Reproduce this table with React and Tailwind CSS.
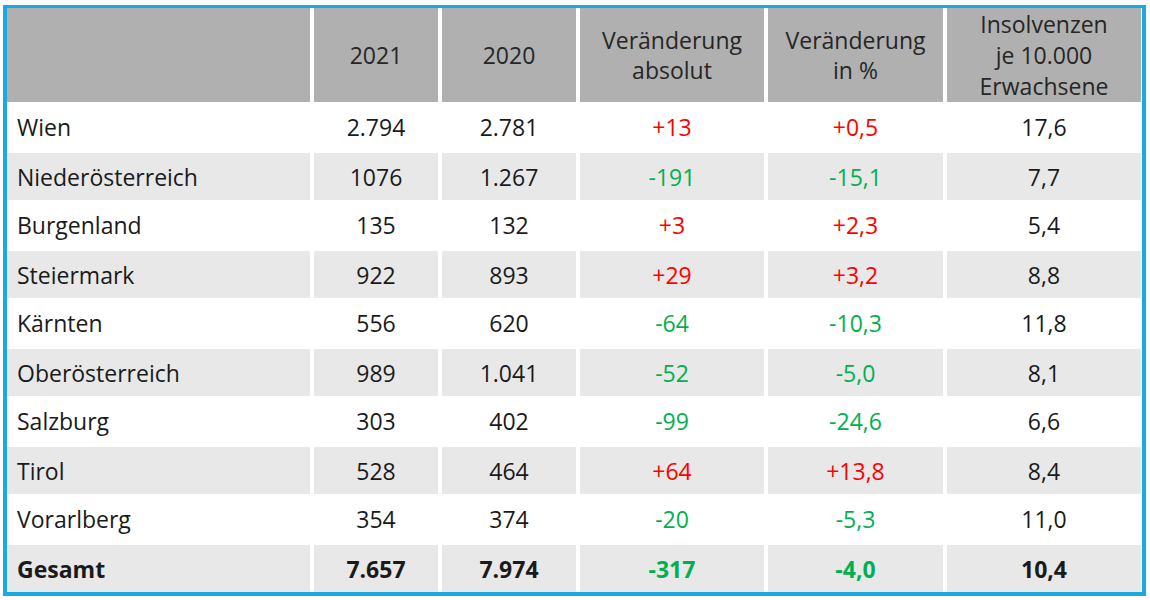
const rows = [
  ['Wien', '2.794', '2.781', '+13', '+0,5', '17,6'],
  ['Niederösterreich', '1076', '1.267', '-191', '-15,1', '7,7'],
  ['Burgenland', '135', '132', '+3', '+2,3', '5,4'],
  ['Steiermark', '922', '893', '+29', '+3,2', '8,8'],
  ['Kärnten', '556', '620', '-64', '-10,3', '11,8'],
  ['Oberösterreich', '989', '1.041', '-52', '-5,0', '8,1'],
  ['Salzburg', '303', '402', '-99', '-24,6', '6,6'],
  ['Tirol', '528', '464', '+64', '+13,8', '8,4'],
  ['Vorarlberg', '354', '374', '-20', '-5,3', '11,0'],
];

const changeColor = (v) => (v.startsWith('+') ? 'text-[#ff0000]' : 'text-[#00b050]');

const Row = ({ cells, shaded, bold }) => {
  const bg = shaded ? 'bg-[#e8e8e8] border-t-2 border-white' : 'bg-white';
  const weight = bold ? 'font-bold' : '';
  return (
    <>
      <div className={`${bg} ${weight} h-[49px] flex items-center pl-[10px] text-[#1a1a1a]`}>{cells[0]}</div>
      {cells.slice(1).map((c, i) => (
        <div
          key={i}
          className={`${bg} ${weight} h-[49px] flex items-center justify-center ${
            i === 2 || i === 3 ? changeColor(c) : 'text-[#1a1a1a]'
          }`}
        >
          {c}
        </div>
      ))}
    </>
  );
};

export default function App() {
  return (
    <div className="w-[1150px] h-[600px] bg-white pt-[5px] pl-[3px]">
      <div
        className="w-[1143px] border-[4px] border-t-[3px] border-[#19aae3]"
        style={{ fontFamily: '"Open Sans", sans-serif' }}
      >
        <div className="grid grid-cols-[303px_124px_134px_184px_175px_194px] gap-x-[4px] text-[23px] leading-[30px]">
          {/* header */}
          <div className="bg-[#b0b0b0] h-[94px]"></div>
          <div className="bg-[#b0b0b0] h-[94px] flex items-center justify-center text-[#262626]">2021</div>
          <div className="bg-[#b0b0b0] h-[94px] flex items-center justify-center text-[#262626]">2020</div>
          <div className="bg-[#b0b0b0] h-[94px] flex items-center justify-center text-center text-[#262626]">
            Veränderung<br />absolut
          </div>
          <div className="bg-[#b0b0b0] h-[94px] flex items-center justify-center text-center text-[#262626]">
            Veränderung<br />in %
          </div>
          <div className="bg-[#b0b0b0] h-[94px] flex items-center justify-center text-center text-[#262626] leading-[31px]">
            Insolvenzen<br />je 10.000<br />Erwachsene
          </div>

          {rows.map((r, i) => (
            <Row key={r[0]} cells={r} shaded={i % 2 === 1} />
          ))}
          <Row cells={['Gesamt', '7.657', '7.974', '-317', '-4,0', '10,4']} shaded bold />
        </div>
      </div>
    </div>
  );
}
